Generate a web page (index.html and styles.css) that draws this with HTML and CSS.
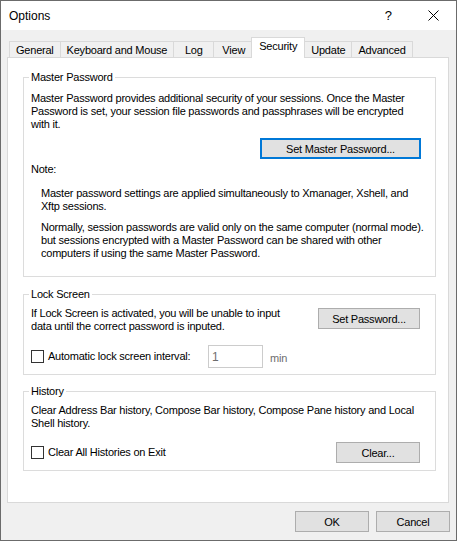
FILE: index.html
```html
<!DOCTYPE HTML>
<html>
<head>
  <title>Options</title>
  <link rel="stylesheet" href="styles.css">
</head>
<body>
<div class="window">
  <div class="titlebar">
    <span class="title">Options</span>
    <span class="help">?</span>
    <svg class="close" width="11" height="11" viewBox="0 0 11 11">
      <path d="M0.5 0.5 L10.5 10.5 M10.5 0.5 L0.5 10.5" stroke="#000" stroke-width="1" fill="none"/>
    </svg>
  </div>

  <div class="tabs">
    <div class="tab">General</div>
    <div class="tab">Keyboard and Mouse</div>
    <div class="tab">Log</div>
    <div class="tab">View</div>
    <div class="tab selected">Security</div>
    <div class="tab">Update</div>
    <div class="tab">Advanced</div>
  </div>

  <div class="panel">
    <fieldset class="group master">
      <legend>Master Password</legend>
      <p class="desc">Master Password provides additional security of your sessions. Once the Master<br>Password is set, your session file passwords and passphrases will be encrypted<br>with it.</p>
      <div class="btn-row">
        <button class="btn focused">Set Master Password...</button>
      </div>
      <p class="note-label">Note:</p>
      <p class="note first">Master password settings are applied simultaneously to Xmanager, Xshell, and<br>Xftp sessions.</p>
      <p class="note">Normally, session passwords are valid only on the same computer (normal mode).<br>but sessions encrypted with a Master Password can be shared with other<br>computers if using the same Master Password.</p>
    </fieldset>

    <fieldset class="group lock">
      <legend>Lock Screen</legend>
      <div class="split">
        <p class="desc">If Lock Screen is activated, you will be unable to input<br>data until the correct password is inputed.</p>
        <button class="btn set-pass">Set Password...</button>
      </div>
      <div class="check-row">
        <label class="check"><input type="checkbox"><span>Automatic lock screen interval:</span></label>
        <input class="interval" type="text" value="1" disabled>
        <span class="unit">min</span>
      </div>
    </fieldset>

    <fieldset class="group history">
      <legend>History</legend>
      <p class="desc">Clear Address Bar history, Compose Bar history, Compose Pane history and Local<br>Shell history.</p>
      <div class="split bottom">
        <label class="check"><input type="checkbox"><span>Clear All Histories on Exit</span></label>
        <button class="btn clear">Clear...</button>
      </div>
    </fieldset>
  </div>

  <div class="footer">
    <button class="btn dlg">OK</button>
    <button class="btn dlg">Cancel</button>
  </div>
</div>
</body>
</html>
```

FILE: styles.css
```css
html, body {
  margin: 0;
  padding: 0;
}

body {
  font-family: "Liberation Sans", Arial, sans-serif;
  font-size: 11px;
  letter-spacing: -0.22px;
  color: #000;
}

p {
  margin: 0;
  white-space: nowrap;
}

.window {
  width: 457px;
  height: 541px;
  box-sizing: border-box;
  border: 1px solid #6b6b6b;
  background: #f0f0f0;
}

.titlebar {
  height: 29px;
  background: #fff;
  display: flex;
  align-items: center;
  font-size: 12px;
  letter-spacing: 0;
}

.title {
  margin-left: 8px;
  flex: 1;
}

.help {
  font-size: 13px;
  margin-right: 36px;
}

.close {
  margin-right: 17px;
}

.tabs {
  display: flex;
  align-items: flex-end;
  margin: 8px 0 0 8px;
  height: 19px;
  position: relative;
  z-index: 1;
}

.tab {
  min-width: 27px;
  height: 15px;
  line-height: 16px;
  padding: 0 6px;
  text-align: center;
  border: 1px solid #d9d9d9;
  border-bottom: none;
  margin-right: -1px;
  background: #f0f0f0;
}

.tab.selected {
  height: 20px;
  line-height: 17px;
  margin: 0 -1px -1px -2px;
  padding: 0 7px;
  background: #fff;
  position: relative;
  z-index: 2;
}

.panel {
  margin: 0 7px 0 6px;
  height: 446px;
  box-sizing: border-box;
  border: 1px solid #d9d9d9;
  background: #fff;
  padding-top: 13px;
  overflow: hidden;
}

.group {
  min-width: 0;
  margin: 0 12px 0 15px;
  padding: 0 15px 0 7px;
  border: 1px solid #dcdcdc;
  line-height: 13px;
}

.group legend {
  padding: 0 2px;
  margin-left: -2px;
  line-height: 13px;
}

.btn {
  font-family: inherit;
  font-size: 11px;
  letter-spacing: inherit;
  color: #000;
  background: #e1e1e1;
  border: 1px solid #adadad;
  height: 21px;
  padding: 0;
  margin: 0;
}

.btn.focused {
  border: 2px solid #0078d7;
}

.master {
  padding-bottom: 16px;
}

.master .desc {
  margin-top: 8px;
}

.btn-row {
  display: flex;
  justify-content: flex-end;
  margin-top: 7px;
}

.btn-row .btn {
  width: 161px;
  margin-right: -1px;
}

.note-label {
  margin-top: 4px;
}

.note {
  margin: 8px 0 0 10px;
}

.note.first {
  margin-top: 11px;
}

.lock {
  margin-top: 11px;
  padding-bottom: 6px;
}

.split {
  display: flex;
  justify-content: space-between;
  align-items: flex-start;
}

.lock .split {
  margin-top: 6px;
}

.set-pass {
  width: 102px;
  margin-top: 1px;
}

.check-row {
  display: flex;
  align-items: center;
  margin-top: 12px;
}

.check {
  display: flex;
  align-items: center;
}

.check-row .check {
  width: 177px;
}

.check input {
  appearance: none;
  width: 13px;
  height: 13px;
  margin: 0 4px 0 0;
  border: 1px solid #333;
  background: #fff;
  box-sizing: border-box;
}

.interval {
  width: 55px;
  height: 23px;
  box-sizing: border-box;
  margin: 0;
  border: 1px solid #ccc;
  background: #fff;
  font-family: inherit;
  font-size: 12px;
  color: #6d6d6d;
  padding: 0 3px;
}

.unit {
  margin: 3px 0 0 7px;
  color: #6d6d6d;
}

.history {
  margin-top: 10px;
  padding-bottom: 7px;
}

.history .desc {
  margin-top: 6px;
}

.split.bottom {
  align-items: center;
  margin-top: 12px;
}

.clear {
  width: 84px;
}

.footer {
  display: flex;
  justify-content: flex-end;
  gap: 7px;
  margin: 8px 6px 0 0;
}

.btn.dlg {
  width: 74px;
}
```
